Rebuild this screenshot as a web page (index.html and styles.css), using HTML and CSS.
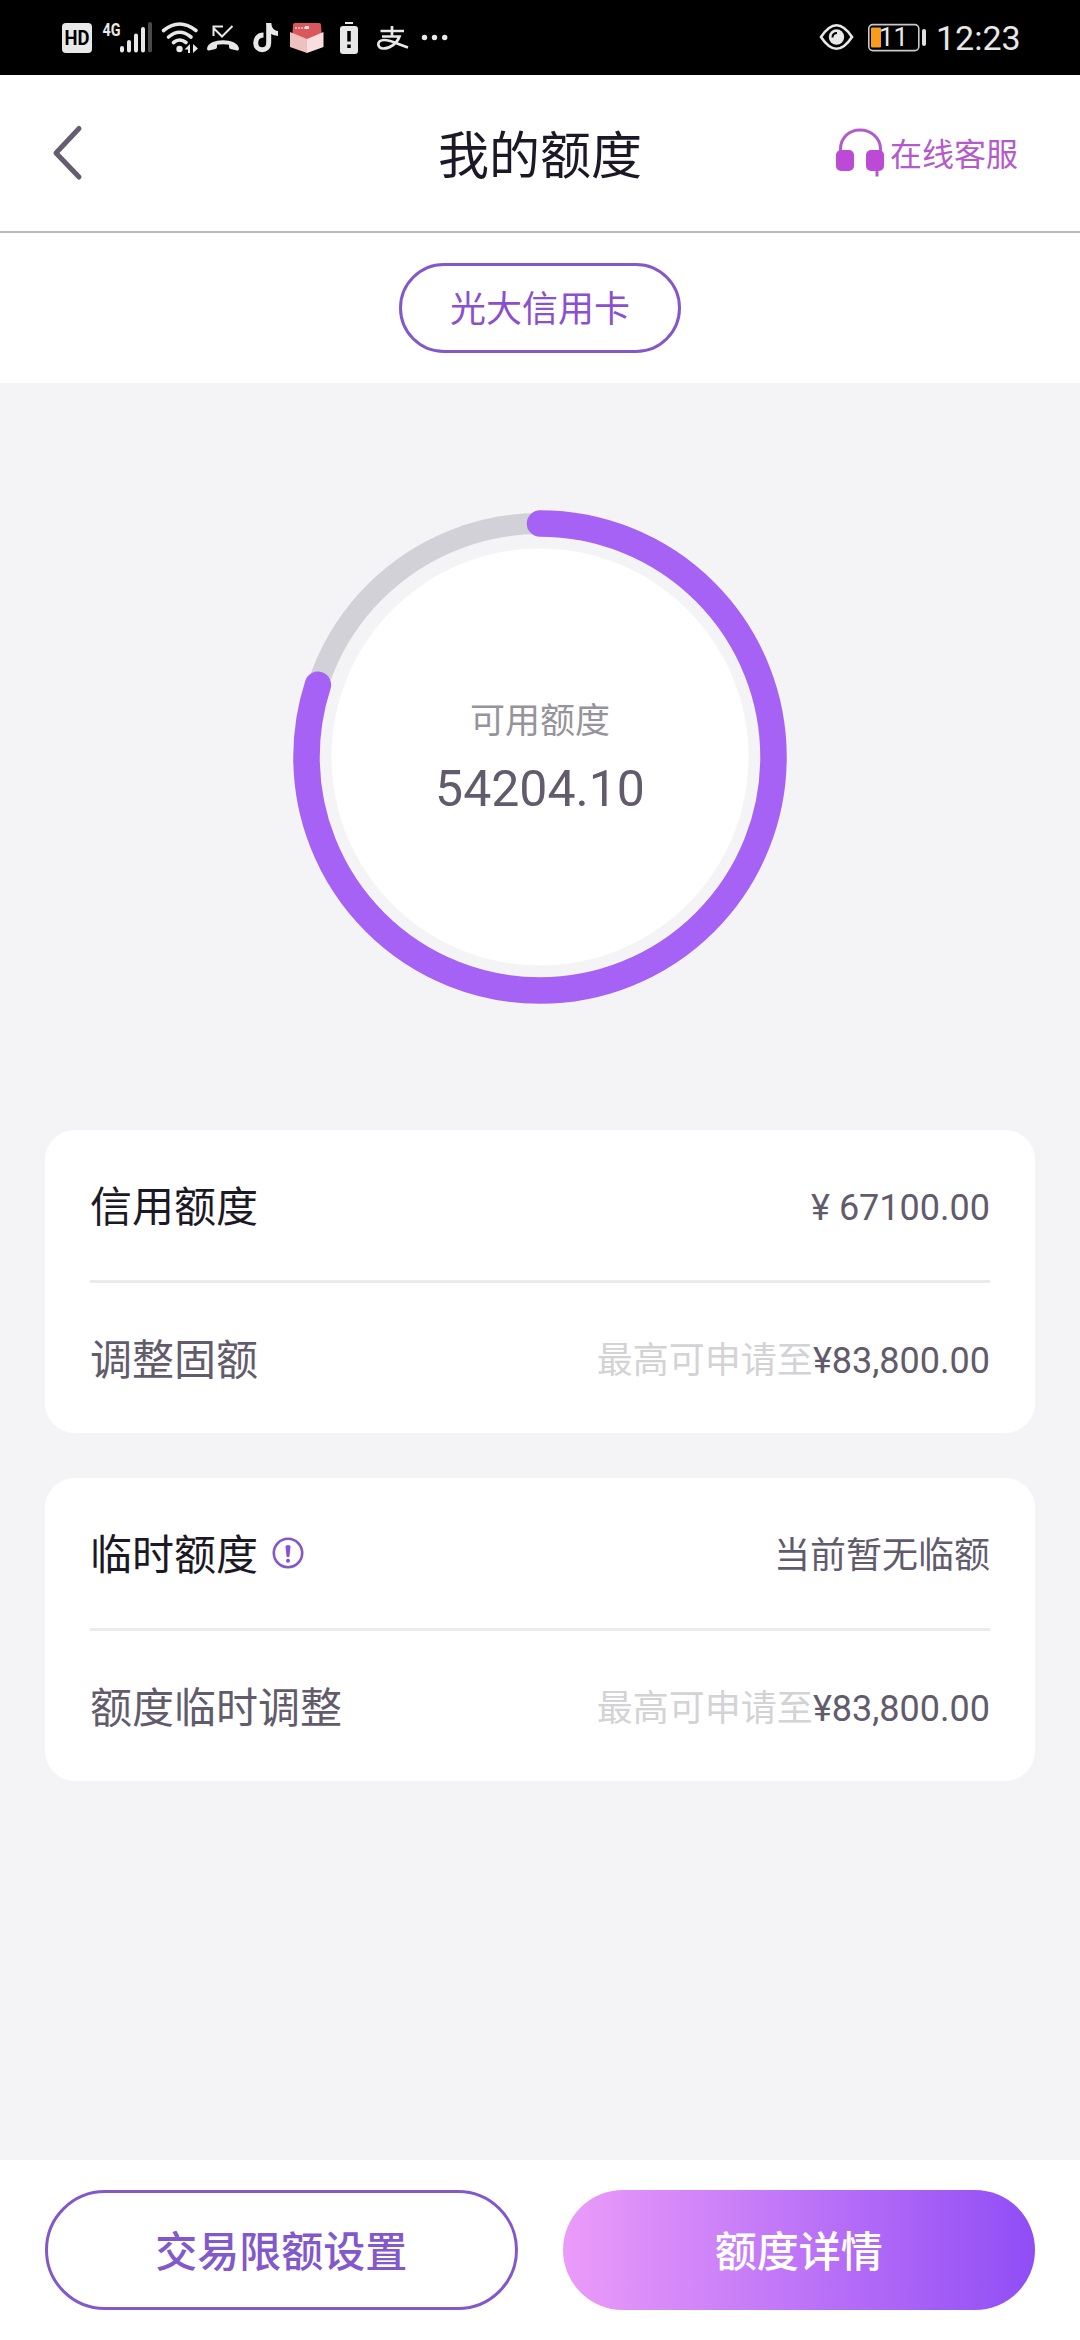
FILE: index.html
```html
<!DOCTYPE html>
<html lang="zh-CN">
<head>
<meta charset="utf-8">
<title>我的额度</title>
<link rel="stylesheet" href="styles.css">
</head>
<body>
<div class="screen">
  <div class="status">
    <div class="status-group">
      <svg width="36" height="75" viewBox="60 0 36 75"><rect x="62" y="23" width="30" height="30" rx="4" fill="#e8e8e8"/><text class="hd" x="77" y="45" text-anchor="middle" textLength="25" lengthAdjust="spacingAndGlyphs">HD</text></svg>
      <svg width="60" height="75" viewBox="96 0 60 75"><text class="net" x="102.500" y="36" textLength="18" lengthAdjust="spacingAndGlyphs">4G</text><g stroke="#e8e8e8" stroke-width="4" stroke-linecap="round"><path d="M122 48v2.500M129 42v8.500M136 35.500v15M143 29v21.500"/><path stroke="#4a4a4a" d="M150 24v26.500"/></g></svg>
      <svg width="46" height="75" viewBox="156 0 46 75"><g fill="none" stroke="#e8e8e8" stroke-width="3.600" stroke-linecap="round"><path d="M163.500 30.500Q179.500 17.500 196 30.500M168.500 37Q179.500 27.500 191 37M173.500 42.500Q179.500 37.500 186 42.500"/></g><circle cx="179.500" cy="49" r="3.200" fill="#e8e8e8"/><path fill="#e8e8e8" d="M190 44v9h-2v-3.500h-3.500zM193 44l5 4.500-5 4.500z"/></svg>
      <svg width="44" height="75" viewBox="202 0 44 75"><path d="M232.500 26L222 36.500L213.500 28M213.500 36V26.500H223" fill="none" stroke="#e8e8e8" stroke-width="2"/><path fill="#e8e8e8" d="M207 48.500C208 43 215 40.300 223 40.300S238 43 239 48.500Q239 51 237 50.500L230.500 49Q229 48.500 229 47V44.800Q223 43.500 217 44.800V47Q217 48.500 215.500 49L209 50.500Q207 51 207 48.500z"/></svg>
      <svg width="38" height="75" viewBox="246 0 38 75"><path fill="none" stroke="#e8e8e8" stroke-width="5" d="M263.500 35C258 35 255.700 39 255.700 43C255.700 47 258.500 49.700 262.200 49.700C266 49.700 268.700 47 268.700 43V23"/><path fill="#e8e8e8" d="M266.200 23H271.200C271.600 28 274 30.500 278 31V36Q273.500 36 269.500 33z"/></svg>
      <svg width="46" height="75" viewBox="284 0 46 75"><path fill="#d9585c" d="M293 25q0-2 2-2h24q2 0 2 2l1 14h-30z"/><path stroke="#f3c7c7" stroke-width="1.500" stroke-dasharray="2 1" d="M295 28h10"/><rect x="305" y="26" width="4" height="3" fill="#f7dddd"/><path fill="#eec1c1" d="M290 32l17 7v14l-17-6z"/><path fill="#f8dede" d="M323.500 32l-16.500 7v14l16.500-6z"/></svg>
      <svg width="38" height="75" viewBox="330 0 38 75"><path fill="#e8e8e8" d="M345 22h8v2h-8z"/><rect x="340" y="26" width="18" height="28" rx="3" fill="#e8e8e8"/><path stroke="#000" stroke-width="3.500" d="M349 31v10.500M349 44.500v3.500"/></svg>
      <svg width="48" height="75" viewBox="368 0 48 75"><path fill="none" stroke="#e8e8e8" stroke-width="2.700" d="M380.500 31H404M392 26V36.500M382 36.500H399.500C397 43.500 390 48.500 383.500 48.500C376.500 48.500 376.500 40 384 40C391 40 399 44.500 408 47.500"/></svg>
      <svg width="40" height="75" viewBox="416 0 40 75"><g fill="#e8e8e8"><circle cx="424.500" cy="37.500" r="2.700"/><circle cx="434.500" cy="37.500" r="2.700"/><circle cx="444.700" cy="37.500" r="2.700"/></g></svg>
    </div>
    <div class="status-group">
      <svg width="48" height="75" viewBox="812 0 48 75"><path fill="none" stroke="#e8e8e8" stroke-width="2.600" d="M820 37Q835.500 13.500 851 37Q835.500 60.500 820 37z"/><circle cx="835.500" cy="37" r="7.700" fill="#e8e8e8"/><path d="M831.500 37.500Q831.500 33 836 33" fill="none" stroke="#000" stroke-width="2"/></svg>
      <svg width="75" height="75" viewBox="860 0 75 75"><rect x="867.800" y="24.600" width="50" height="26" rx="4" fill="none" stroke="#c8c8c8" stroke-width="1.600"/><rect x="870" y="27.500" width="10" height="20" rx="1" fill="#f89c1c"/><rect x="921" y="29" width="4" height="17" rx="2" fill="#e0e0e0"/><text class="charge" x="878" y="46">11</text></svg>
      <span class="clock">12:23</span>
    </div>
  </div>

  <header class="header">
    <svg class="back" width="36" height="60" viewBox="0 0 36 60"><path d="M31 5.500L8 30L31 54" fill="none" stroke="#655c70" stroke-width="5" stroke-linecap="round" stroke-linejoin="round"/></svg>
    <h1 class="title">我的额度</h1>
    <div class="service">
      <svg width="50" height="50" viewBox="0 0 50 50"><path d="M5.500 24V21C5.500 10 14 2 25 2S45.500 10 45.500 21V24M42 38v10.500" fill="none" stroke="#b45acb" stroke-width="3"/><rect x="1" y="22" width="18" height="21" rx="5" fill="#bd4ad6"/><rect x="31" y="22" width="18" height="21" rx="5" fill="#bd4ad6"/></svg>
      <span>在线客服</span>
    </div>
  </header>

  <div class="tabs"><div class="tab">光大信用卡</div></div>

  <main class="main">
    <div class="gauge">
      <svg class="ring" width="494" height="494" viewBox="0 0 494 494">
        <circle cx="247" cy="247" r="233.500" fill="none" stroke="#d3d1d8" stroke-width="21"/>
        <circle cx="247" cy="247" r="208.500" fill="#fff"/>
        <circle cx="247" cy="247" r="233.500" fill="none" stroke="#a661f5" stroke-width="26.500" stroke-linecap="round" pathLength="100" stroke-dasharray="80 100" transform="rotate(-90 247 247)"/>
      </svg>
      <div class="gauge-text">
        <div class="gauge-label">可用额度</div>
        <div class="gauge-value">54204.10</div>
      </div>
    </div>

    <section class="card">
      <div class="row"><span class="label">信用额度</span><span class="value">¥ 67100.00</span></div>
      <div class="row"><span class="label soft">调整固额</span><span class="value"><span class="hint">最高可申请至</span>¥83,800.00</span></div>
    </section>
    <section class="card">
      <div class="row"><span class="label-group"><span class="label">临时额度</span><svg width="32" height="32" viewBox="0 0 32 32"><circle cx="16" cy="16" r="14.200" fill="none" stroke="#8358cb" stroke-width="2.600"/><path fill="#8a50d8" d="M13.500 9.500Q13.500 8 16 8T18.500 9.500L17.500 19.500Q16 21 14.500 19.500z"/><circle cx="16" cy="23.800" r="2" fill="#8a50d8"/></svg></span><span class="value">当前暂无临额</span></div>
      <div class="row"><span class="label soft">额度临时调整</span><span class="value"><span class="hint">最高可申请至</span>¥83,800.00</span></div>
    </section>
  </main>

  <footer class="footer">
    <div class="btn outline">交易限额设置</div>
    <div class="btn filled">额度详情</div>
  </footer>
</div>
</body>
</html>
```
FILE: styles.css
```css
* { box-sizing: border-box; }
body {
  margin: 0;
  font-family: Roboto, "Noto Sans CJK SC", sans-serif;
  color: #625b6c;
}
svg { display: block; flex: none; }
.screen {
  width: 1080px;
  height: 2340px;
  display: flex;
  flex-direction: column;
  background: #fff;
  overflow: hidden;
}
.status {
  height: 75px;
  flex: none;
  background: #000;
  display: flex;
  justify-content: space-between;
  padding: 0 61px 0 60px;
}
.status-group { display: flex; }
.hd { font: 700 21px Roboto, sans-serif; fill: #000; }
.net { font: 700 19px Roboto, sans-serif; fill: #e8e8e8; }
.charge { font: 400 26px Roboto, sans-serif; fill: #e8e8e8; }
.clock { width: 83px; font-size: 34px; line-height: 76px; color: #e8e8e8; white-space: nowrap; }
.header {
  height: 158px;
  flex: none;
  border-bottom: 2px solid #b8bbb9;
  display: grid;
  grid-template-columns: 1fr auto 1fr;
  align-items: center;
  padding: 0 62px 0 48px;
}
.title {
  margin: 0 -7px 0 7px;
  padding-top: 7px;
  font-size: 51px;
  font-weight: 400;
  line-height: 76px;
  color: #1c1826;
}
.service {
  justify-self: end;
  display: flex;
  align-items: center;
  gap: 5px;
  font-size: 32px;
  line-height: 48px;
  color: #b45acb;
}
.service span { padding-top: 3px; }
.tabs {
  height: 150px;
  flex: none;
  display: flex;
  align-items: center;
  justify-content: center;
}
.tab {
  width: 282px;
  height: 90px;
  border: 3px solid #8358cb;
  border-radius: 45px;
  font-size: 36px;
  line-height: 89px;
  text-align: center;
  color: #8a50d0;
}
.main {
  flex: 1;
  background: #f4f4f7;
  padding: 127px 45px 0;
  display: flex;
  flex-direction: column;
  align-items: center;
}
.gauge { display: grid; width: 494px; height: 494px; margin-bottom: 126px; }
.gauge > * { grid-area: 1 / 1; }
.gauge-text { text-align: center; padding-top: 186px; }
.gauge-label { font-size: 35px; line-height: 52px; color: #96939c; }
.gauge-value { font-size: 50px; line-height: 82px; }
.card {
  width: 100%;
  background: #fff;
  border-radius: 30px;
  padding: 0 45px;
  margin-bottom: 45px;
}
.row {
  height: 150px;
  display: flex;
  align-items: center;
  justify-content: space-between;
}
.row + .row { height: 153px; border-top: 3px solid #ebebeb; }
.label-group { display: flex; align-items: center; gap: 14px; }
.label { padding-top: 6px; font-size: 42px; line-height: 62px; color: #1c1826; }
.soft { color: #625b6c; }
.value { padding-top: 5px; font-size: 36px; line-height: 54px; }
.hint { color: #d3d3d5; }
.footer {
  height: 180px;
  flex: none;
  display: grid;
  grid-template-columns: 1fr 1fr;
  gap: 45px;
  padding: 30px 45px;
}
.btn {
  height: 120px;
  border-radius: 60px;
  font-size: 42px;
  font-weight: 500;
  line-height: 125px;
  text-align: center;
}
.outline { border: 3px solid #8358cb; line-height: 119px; color: #8358cb; }
.filled { background: linear-gradient(90deg, #eb9cf9, #904df5); color: #fff; }
```
